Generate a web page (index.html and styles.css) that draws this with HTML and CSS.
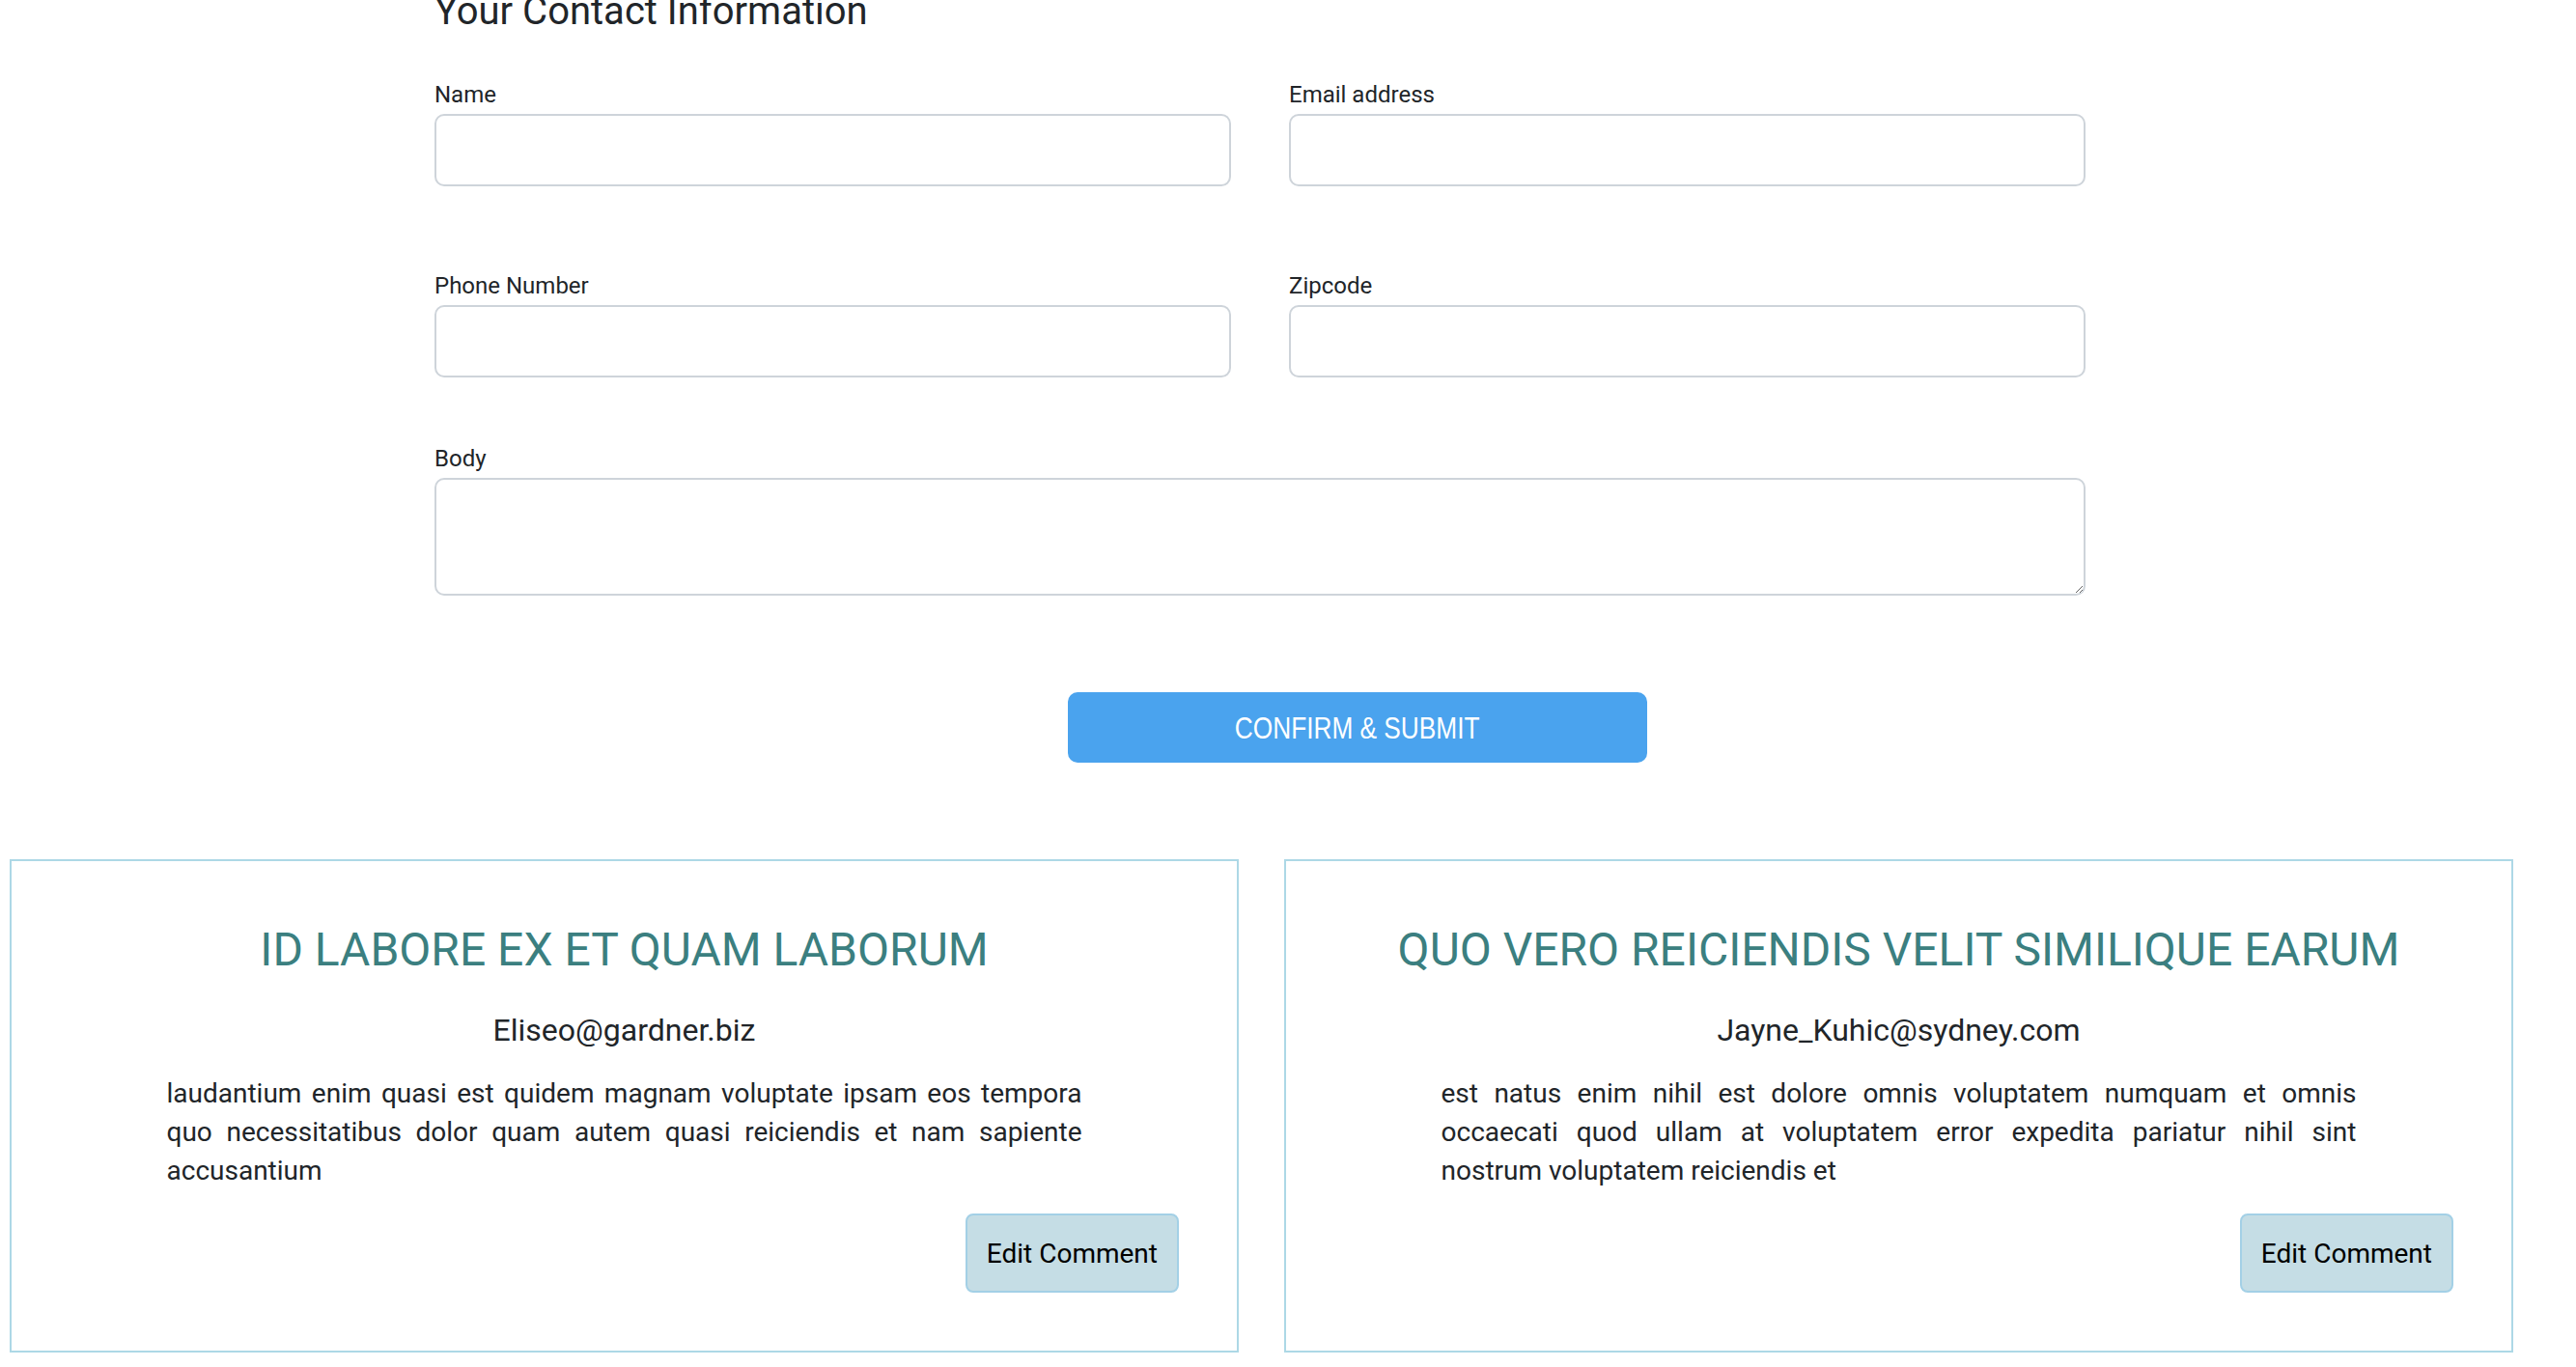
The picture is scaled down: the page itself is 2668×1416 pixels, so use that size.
FILE: index.html
```html
<!DOCTYPE html>
<html lang="en">
<head>
<meta charset="utf-8">
<title>Contact</title>
<link rel="stylesheet" href="styles.css">
</head>
<body>
<main class="page">
  <section class="contact">
    <h2 class="contact-title">Your Contact Information</h2>
    <form class="form">
      <div class="grid">
        <div class="field">
          <label class="label" for="name">Name</label>
          <input class="control" id="name" type="text">
        </div>
        <div class="field">
          <label class="label" for="email">Email address</label>
          <input class="control" id="email" type="email">
        </div>
        <div class="field">
          <label class="label" for="phone">Phone Number</label>
          <input class="control" id="phone" type="text">
        </div>
        <div class="field">
          <label class="label" for="zip">Zipcode</label>
          <input class="control" id="zip" type="text">
        </div>
      </div>
      <div class="field field-body">
        <label class="label" for="body">Body</label>
        <textarea class="control area" id="body"></textarea>
      </div>
      <button class="submit" type="button"><span class="submit-text">CONFIRM &amp; SUBMIT</span></button>
    </form>
  </section>

  <section class="comments">
    <article class="card">
      <h3 class="card-title">ID LABORE EX ET QUAM LABORUM</h3>
      <p class="card-email">Eliseo@gardner.biz</p>
      <p class="card-body">laudantium enim quasi est quidem magnam voluptate ipsam eos tempora quo necessitatibus dolor quam autem quasi reiciendis et nam sapiente accusantium</p>
      <button class="edit" type="button">Edit Comment</button>
    </article>
    <article class="card">
      <h3 class="card-title">QUO VERO REICIENDIS VELIT SIMILIQUE EARUM</h3>
      <p class="card-email">Jayne_Kuhic@sydney.com</p>
      <p class="card-body">est natus enim nihil est dolore omnis voluptatem numquam et omnis occaecati quod ullam at voluptatem error expedita pariatur nihil sint nostrum voluptatem reiciendis et</p>
      <button class="edit" type="button">Edit Comment</button>
    </article>
  </section>
</main>
</body>
</html>
```

FILE: styles.css
```css
html, body {
  margin: 0;
  padding: 0;
  background: #ffffff;
}

body {
  font-family: Roboto, "Liberation Sans", sans-serif;
  color: #212529;
  overflow: hidden;
}

.contact {
  margin-left: 450px;
  width: 1710px;
}

.contact-title {
  font-size: 40px;
  font-weight: 400;
  line-height: 48px;
  margin: -12px 0 44px;
}

.form {
  margin: 0;
}

.grid {
  display: grid;
  grid-template-columns: 825px 825px;
  column-gap: 60px;
  row-gap: 85px;
}

.field {
  display: flex;
  flex-direction: column;
}

.label {
  display: block;
  font-size: 24px;
  line-height: 36px;
  margin-bottom: 2px;
}

.control {
  display: block;
  width: 100%;
  box-sizing: border-box;
  height: 75px;
  border: 2px solid #ced4da;
  border-radius: 10px;
  background: #fff;
  font-family: Roboto, sans-serif;
  font-size: 24px;
  padding: 8px 18px;
  margin: 0;
}

.field-body {
  margin-top: 66px;
}

.area {
  height: 122px;
}

.submit {
  display: block;
  margin: 100px 0 0 656px;
  width: 600px;
  height: 73px;
  background: #4aa3ee;
  border: none;
  border-radius: 10px;
  color: #ffffff;
  font-family: "Liberation Sans", Arial, sans-serif;
  font-size: 32px;
  padding: 0;
}

.submit-text {
  display: inline-block;
  transform: scaleX(0.82);
  transform-origin: center;
  white-space: nowrap;
  position: relative;
  top: 1px;
}

.comments {
  display: flex;
  gap: 47px;
  padding-left: 10px;
  margin-top: 100px;
}

.card {
  width: 1273px;
  box-sizing: border-box;
  border: 2px solid #add8e6;
  padding: 63px 0 60px;
  display: flex;
  flex-direction: column;
  align-items: center;
}

.card-title {
  margin: 0;
  font-size: 48px;
  font-weight: 400;
  line-height: 58px;
  color: #3b7f80;
  text-align: center;
}

.card-email {
  margin: 30px 0 0;
  font-size: 32px;
  line-height: 48px;
  text-align: center;
}

.card-body {
  margin: 22px 0 0;
  width: 948px;
  font-size: 28px;
  line-height: 40px;
  text-align: justify;
}

.edit {
  align-self: flex-end;
  margin: 24px 60px 0 0;
  height: 82px;
  padding: 0 20px;
  background: #c5dde5;
  border: 2px solid #a3d0e6;
  border-radius: 8px;
  color: #000;
  font-family: Roboto, sans-serif;
  font-size: 28px;
}
```
